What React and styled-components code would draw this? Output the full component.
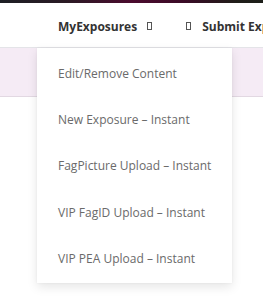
import React from 'react';
import styled, { createGlobalStyle } from 'styled-components';

const Global = createGlobalStyle`
  body {
    margin: 0;
    background: #fff;
    font-family: "Open Sans", "Liberation Sans", sans-serif;
    overflow: hidden;
  }
`;

const Page = styled.div`
  position: relative;
  width: 263px;
  height: 300px;
  overflow: hidden;
`;

const TopStrip = styled.div`
  height: 3px;
  background: linear-gradient(90deg, #1d1f24 0%, #2a1a24 25%, #4b0b2e 50%, #3a0a26 70%, #1f1d18 90%, #1d1f1a 100%);
`;

const Header = styled.div`
  height: 44px;
  display: flex;
  align-items: center;
  padding-left: 58px;
  border-bottom: 1px solid #e4e4e8;
  white-space: nowrap;
`;

const NavItem = styled.div`
  display: flex;
  align-items: center;
  gap: ${(p) => p.$gap || 10}px;
  font-size: 12px;
  font-weight: 700;
  color: #333;
  margin-right: ${(p) => p.$mr || 0}px;
  padding-top: 2px;
`;

const Glyph = styled.span`
  display: inline-block;
  width: 5px;
  height: 8px;
  border: 1px solid #555;
  box-sizing: border-box;
`;

const Band = styled.div`
  height: 48px;
  background: #f5ebf5;
  border-bottom: 1px solid #e2d8e2;
`;

const Dropdown = styled.ul`
  position: absolute;
  left: 37px;
  top: 48px;
  width: 195px;
  margin: 0;
  padding: 3px 0 1px;
  list-style: none;
  background: #fff;
  box-shadow: 0 4px 10px rgba(0, 0, 0, 0.1), 0 0 2px rgba(0, 0, 0, 0.06);
`;

const Item = styled.li`
  padding: 14px 0 14px 21px;
  line-height: 18.2px;
  font-size: 12px;
  color: #6a6a6a;
  white-space: nowrap;
`;

const items = [
  'Edit/Remove Content',
  'New Exposure – Instant',
  'FagPicture Upload – Instant',
  'VIP FagID Upload – Instant',
  'VIP PEA Upload – Instant',
];

export default function App() {
  return (
    <Page>
      <Global />
      <TopStrip />
      <Header>
        <NavItem $mr={34}>
          MyExposures <Glyph />
        </NavItem>
        <NavItem $gap={11}>
          <Glyph /> Submit Exposure
        </NavItem>
      </Header>
      <Band />
      <Dropdown>
        {items.map((t) => (
          <Item key={t}>{t}</Item>
        ))}
      </Dropdown>
    </Page>
  );
}
